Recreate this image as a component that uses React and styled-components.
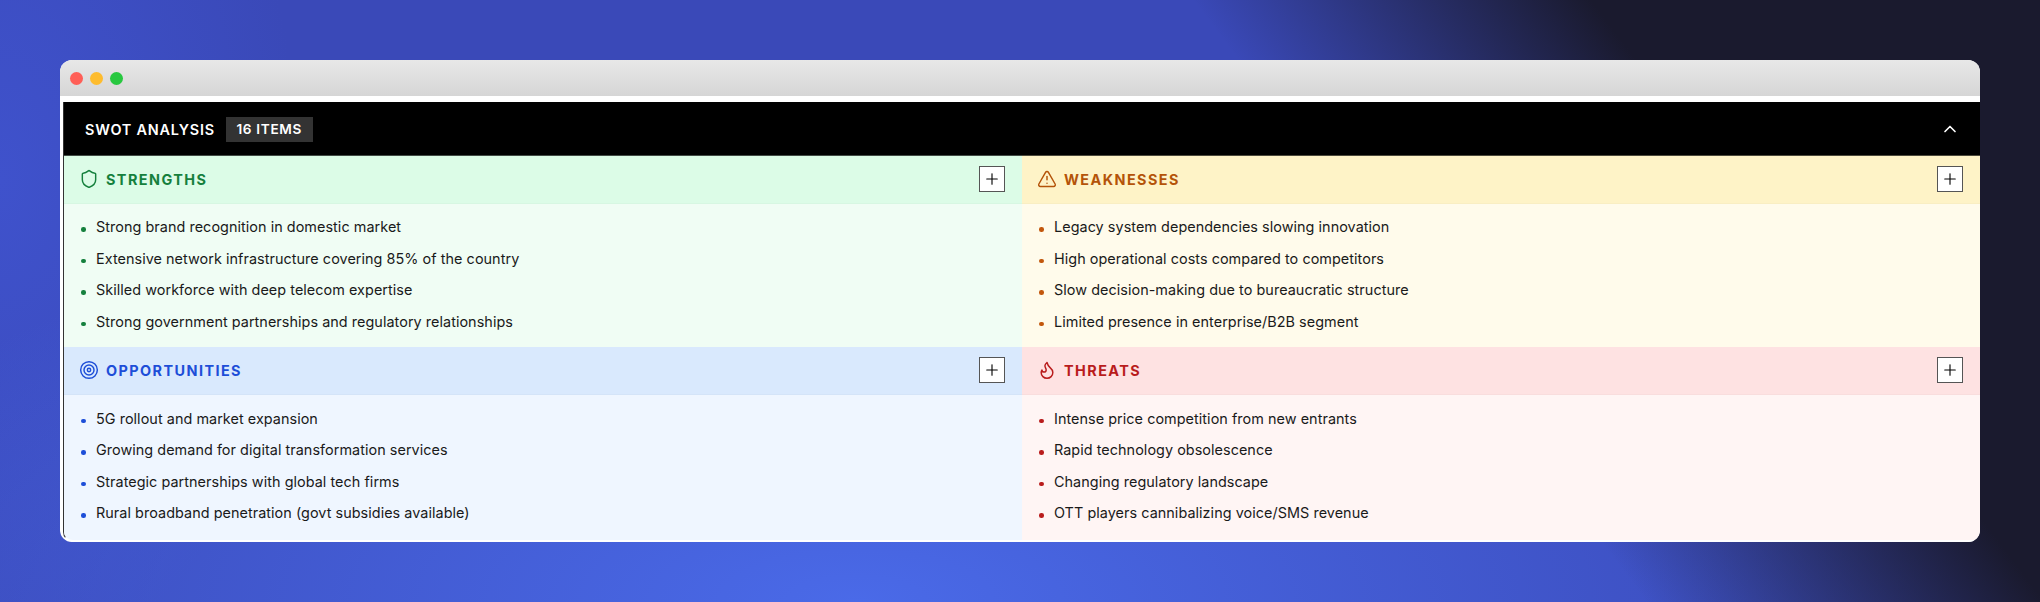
import React from 'react'
import styled, { createGlobalStyle } from 'styled-components'
import { Shield, TriangleAlert, Target, Flame, Plus, ChevronUp } from 'lucide-react'

const GlobalStyle = createGlobalStyle`
  html, body {
    margin: 0;
    padding: 0;
  }
  body {
    font-family: Inter, "Liberation Sans", sans-serif;
    width: 2040px;
    height: 602px;
    overflow: hidden;
  }
`

const themes = {
  green: { head: '#dcfce7', body: '#f0fdf4', color: '#15803d', dot: '#15803d' },
  amber: { head: '#fef3c7', body: '#fffbeb', color: '#b45309', dot: '#c2570c' },
  blue: { head: '#d9e9fd', body: '#eff6ff', color: '#1d4ed8', dot: '#1d4ed8' },
  red: { head: '#fee2e2', body: '#fff5f4', color: '#b91c1c', dot: '#b91c1c' }
}

const Backdrop = styled.div`
  box-sizing: border-box;
  width: 2040px;
  height: 602px;
  padding: 60px;
  background:
    linear-gradient(53deg, rgba(26, 26, 46, 0) 66%, #1a1a2e 82%),
    radial-gradient(ellipse 1100px 420px at 42% 100%, #4a6ae8 0%, rgba(74, 106, 232, 0) 100%),
    radial-gradient(ellipse 300px 500px at 0% 30%, #3f52cc 0%, rgba(63, 82, 204, 0) 100%),
    #3a49b8;
`

const Window = styled.div`
  height: 482px;
  border-radius: 12px;
  overflow: hidden;
  background: #fff;
  display: flex;
  flex-direction: column;
`

const TitleBar = styled.div`
  flex: none;
  height: 36px;
  background: linear-gradient(180deg, #e8e8e8 0%, #d6d6d6 100%);
  display: flex;
  align-items: center;
  gap: 7px;
  padding: 0 10px;
`

const Light = styled.span`
  width: 13px;
  height: 13px;
  border-radius: 50%;
  background: ${props => props.color};
`

const Frame = styled.div`
  flex: 1;
  min-height: 0;
  margin-top: 6px;
  margin-left: 3px;
  border-left: 1px solid #333;
  border-bottom: 2px solid #fff;
  border-bottom-left-radius: 10px;
  display: flex;
  flex-direction: column;
  overflow: hidden;
`

const Banner = styled.div`
  flex: none;
  position: relative;
  height: 53px;
  box-sizing: border-box;
  background: #000;
  box-shadow: 0 1px 0 rgba(0, 0, 0, 0.7);
  color: #fff;
  display: flex;
  align-items: center;
  padding: 1px 20px 0 21px;
`

const BannerTitle = styled.span`
  font-size: 14.4px;
  font-weight: 600;
  letter-spacing: 0.8px;
`

const Count = styled.span`
  margin-left: 11px;
  background: #333;
  padding: 0 10.5px;
  height: 25px;
  line-height: 25px;
  font-size: 13.6px;
  font-weight: 600;
  letter-spacing: 0.68px;
`

const Collapse = styled.span`
  margin-left: auto;
  display: flex;
`

const Grid = styled.div`
  flex: 1;
  min-height: 0;
  display: grid;
  grid-template-columns: 1fr 1fr;
  grid-template-rows: 191.6px 1fr;
`

const Cell = styled.section`
  display: flex;
  flex-direction: column;
  background: ${props => themes[props.$tone].body};
`

const CellHead = styled.header`
  flex: none;
  height: 48.5px;
  box-sizing: border-box;
  padding: 0 17px 0 15px;
  display: flex;
  align-items: center;
  background: ${props => themes[props.$tone].head};
  color: ${props => themes[props.$tone].color};
  border-bottom: 1px solid rgba(0, 0, 0, 0.02);
`

const CellTitle = styled.h3`
  margin: 1px 0 0 7px;
  font-size: 14.4px;
  font-weight: 700;
  letter-spacing: 1.44px;
`

const AddButton = styled.button`
  margin-left: auto;
  width: 26px;
  height: 26px;
  padding: 0;
  box-sizing: border-box;
  background: #fff;
  border: 1px solid #555;
  color: #000;
  display: flex;
  align-items: center;
  justify-content: center;
`

const List = styled.ul`
  margin: 0;
  padding: 7.5px 17px 0;
  list-style: none;
`

const Item = styled.li`
  height: 31.5px;
  display: flex;
  align-items: center;
  font-size: 14.4px;
  color: #1a1a1a;
  letter-spacing: 0.05px;
  &::before {
    content: '';
    flex: none;
    width: 4.5px;
    height: 4.5px;
    margin: 5px 10.5px 0 0;
    border-radius: 50%;
    background: ${props => themes[props.$tone].dot};
  }
`

const sections = [
  {
    tone: 'green',
    title: 'STRENGTHS',
    Icon: Shield,
    items: [
      'Strong brand recognition in domestic market',
      'Extensive network infrastructure covering 85% of the country',
      'Skilled workforce with deep telecom expertise',
      'Strong government partnerships and regulatory relationships'
    ]
  },
  {
    tone: 'amber',
    title: 'WEAKNESSES',
    Icon: TriangleAlert,
    items: [
      'Legacy system dependencies slowing innovation',
      'High operational costs compared to competitors',
      'Slow decision-making due to bureaucratic structure',
      'Limited presence in enterprise/B2B segment'
    ]
  },
  {
    tone: 'blue',
    title: 'OPPORTUNITIES',
    Icon: Target,
    items: [
      '5G rollout and market expansion',
      'Growing demand for digital transformation services',
      'Strategic partnerships with global tech firms',
      'Rural broadband penetration (govt subsidies available)'
    ]
  },
  {
    tone: 'red',
    title: 'THREATS',
    Icon: Flame,
    items: [
      'Intense price competition from new entrants',
      'Rapid technology obsolescence',
      'Changing regulatory landscape',
      'OTT players cannibalizing voice/SMS revenue'
    ]
  }
]

const App = () => (
  <Backdrop>
    <GlobalStyle />
    <Window>
      <TitleBar>
        <Light color="#ff5f57" />
        <Light color="#febc2e" />
        <Light color="#28c840" />
      </TitleBar>
      <Frame>
        <Banner>
          <BannerTitle>SWOT ANALYSIS</BannerTitle>
          <Count>16 ITEMS</Count>
          <Collapse><ChevronUp size={20} strokeWidth={2} /></Collapse>
        </Banner>
        <Grid>
          {sections.map(({ tone, title, Icon, items }) => (
            <Cell key={title} $tone={tone}>
              <CellHead $tone={tone}>
                <Icon size={20} strokeWidth={1.75} />
                <CellTitle>{title}</CellTitle>
                <AddButton><Plus size={18} strokeWidth={1.5} /></AddButton>
              </CellHead>
              <List>
                {items.map(item => <Item key={item} $tone={tone}>{item}</Item>)}
              </List>
            </Cell>
          ))}
        </Grid>
      </Frame>
    </Window>
  </Backdrop>
)

export default App
